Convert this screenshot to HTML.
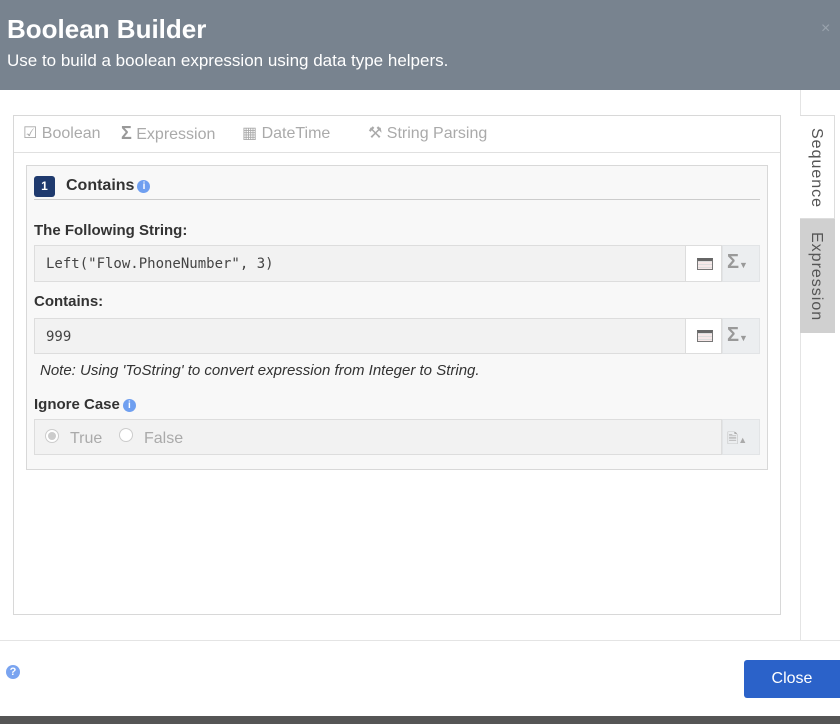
<!DOCTYPE html>
<html><head><style>
*{box-sizing:border-box;margin:0;padding:0}
body{width:840px;height:724px;position:relative;overflow:hidden;font-family:"Liberation Sans",sans-serif;background:#fff}
.a{position:absolute}
.lbl{font-weight:bold;font-size:15px;color:#333}
.inp{background:#f2f2f2;border:1px solid #ddd;font-family:"DejaVu Sans Mono","Liberation Mono",monospace;font-size:14px;color:#444;padding-left:11px;line-height:36px}
.ib{background:#fff;border:1px solid #ddd}
.sg{background:#eceef0;border:1px solid #e2e4e6;color:#999;font-size:20px;font-weight:bold;padding-left:4px;line-height:32px}
.tab{font-size:16px;color:#aaa}
.inf{display:inline-block;width:13px;height:13px;border-radius:50%;background:#6f9ff0;color:#fff;font-size:10px;text-align:center;line-height:13px;vertical-align:1px;margin-left:3px}
</style></head><body>
<div class="a" style="left:0;top:0;width:840px;height:90px;background:#78838f"></div>
<div class="a" style="left:7px;top:14px;font-size:26px;font-weight:bold;color:#fff">Boolean Builder</div>
<div class="a" style="left:7px;top:51px;font-size:17px;color:#fff">Use to build a boolean expression using data type helpers.</div>
<div class="a" style="left:821px;top:20px;font-size:16px;color:#9aa3ad">×</div>

<div class="a" style="left:800px;top:90px;width:1px;height:550px;background:#e4e4e4"></div>
<div class="a" style="left:800px;top:115px;width:35px;height:104px;background:#fff;border:1px solid #ddd;border-left:none"></div>
<div class="a" style="left:800px;top:219px;width:35px;height:114px;background:#d0d0d0"></div>
<div class="a" style="left:807px;top:128px;writing-mode:vertical-rl;font-size:16px;color:#555;letter-spacing:1px">Sequence</div>
<div class="a" style="left:807px;top:232px;writing-mode:vertical-rl;font-size:16px;color:#555;letter-spacing:1px">Expression</div>

<div class="a" style="left:13px;top:115px;width:768px;height:500px;border:1px solid #d8d8d8;background:#fff"></div>
<div class="a" style="left:14px;top:152px;width:766px;height:1px;background:#e0e0e0"></div>
<div class="a tab" style="left:23px;top:123px">☑ Boolean</div>
<div class="a tab" style="left:121px;top:123px"><b style="font-size:18px;color:#999">Σ</b> Expression</div>
<div class="a tab" style="left:242px;top:123px">▦ DateTime</div>
<div class="a tab" style="left:368px;top:123px">⚒ String Parsing</div>

<div class="a" style="left:26px;top:165px;width:742px;height:305px;background:#f8f8f8;border:1px solid #d8d8d8"></div>
<div class="a" style="left:34px;top:176px;width:21px;height:21px;background:#1f3a6e;border-radius:3px;color:#fff;font-size:12px;font-weight:bold;text-align:center;line-height:21px">1</div>
<div class="a lbl" style="left:66px;top:177px;font-size:16px">Contains<span class="inf">i</span></div>
<div class="a" style="left:34px;top:199px;width:726px;height:1px;background:#ccc"></div>

<div class="a lbl" style="left:34px;top:222px">The Following String:</div>
<div class="a inp" style="left:34px;top:245px;width:652px;height:37px">Left("Flow.PhoneNumber", 3)</div>
<div class="a ib" style="left:685px;top:245px;width:37px;height:37px"><div style="margin:12px 0 0 11px;width:16px;height:12px;border:1px solid #777;border-top:3px solid #666;background:repeating-linear-gradient(#ddd 0 1px,#f6e8e8 1px 3px)"></div></div>
<div class="a sg" style="left:722px;top:245px;width:38px;height:37px">Σ<span style="font-size:9px">▼</span></div>

<div class="a lbl" style="left:34px;top:293px">Contains:</div>
<div class="a inp" style="left:34px;top:318px;width:652px;height:36px">999</div>
<div class="a ib" style="left:685px;top:318px;width:37px;height:36px"><div style="margin:11px 0 0 11px;width:16px;height:12px;border:1px solid #777;border-top:3px solid #666;background:repeating-linear-gradient(#ddd 0 1px,#f6e8e8 1px 3px)"></div></div>
<div class="a sg" style="left:722px;top:318px;width:38px;height:36px">Σ<span style="font-size:9px">▼</span></div>

<div class="a" style="left:40px;top:362px;font-size:15px;font-style:italic;color:#333">Note: Using 'ToString' to convert expression from Integer to String.</div>
<div class="a lbl" style="left:34px;top:396px">Ignore Case<span class="inf">i</span></div>
<div class="a" style="left:34px;top:419px;width:688px;height:36px;background:#f2f2f2;border:1px solid #ddd"></div>
<div class="a" style="left:45px;top:429px;width:14px;height:14px;border-radius:50%;border:1px solid #ccc;background:#fff"><div style="margin:2px;width:8px;height:8px;border-radius:50%;background:#ccc"></div></div>
<div class="a" style="left:70px;top:430px;font-size:16px;color:#aaa">True</div>
<div class="a" style="left:119px;top:428px;width:14px;height:14px;border-radius:50%;border:1px solid #ccc;background:#fff"></div>
<div class="a" style="left:144px;top:430px;font-size:16px;color:#aaa">False</div>
<div class="a" style="left:722px;top:419px;width:38px;height:36px;background:#eceef0;border:1px solid #e2e4e6;color:#aaa;font-size:14px;padding:8px 0 0 4px">🗎<span style="font-size:9px">▲</span></div>

<div class="a" style="left:0;top:640px;width:840px;height:1px;background:#e4e4e4"></div>
<div class="a" style="left:6px;top:665px;width:14px;height:14px;border-radius:50%;background:#7aa4f0;color:#fff;font-size:11px;font-weight:bold;text-align:center;line-height:14px">?</div>
<div class="a" style="left:744px;top:660px;width:96px;height:38px;background:#2b62c9;border-radius:3px 0 0 3px;color:#fff;font-size:16px;text-align:center;line-height:38px">Close</div>
<div class="a" style="left:0;top:716px;width:840px;height:8px;background:#555"></div>
</body></html>
